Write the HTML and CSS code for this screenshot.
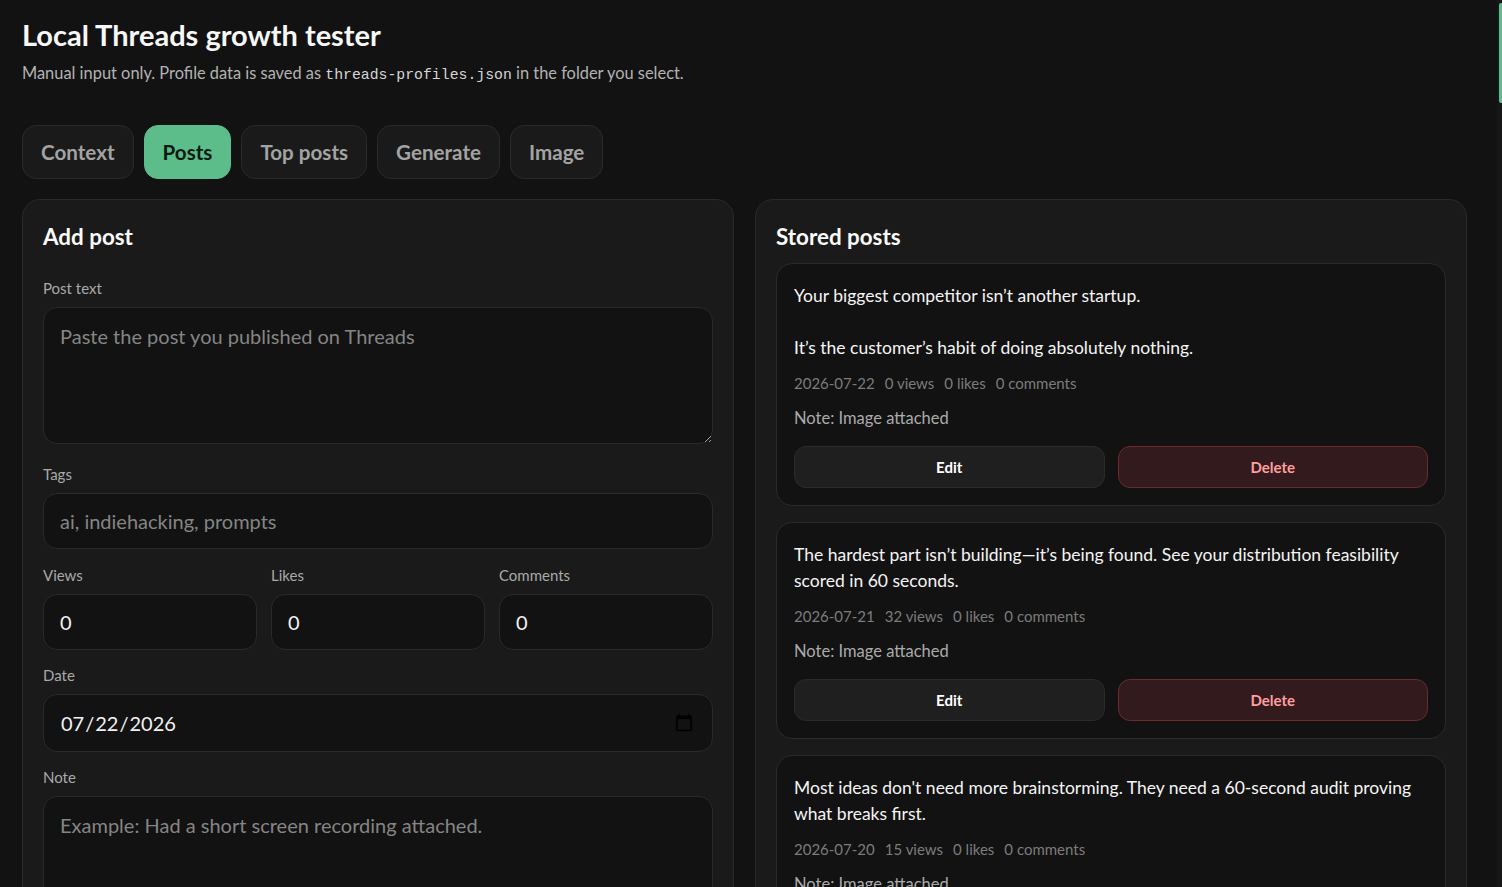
FILE: index.html
```html
<!DOCTYPE html>
<html lang="en">
<head>
<meta charset="utf-8">
<title>Local Threads growth tester</title>
<link rel="stylesheet" href="styles.css">
</head>
<body>
<div class="scrollbar" aria-hidden="true"><div class="scrollbar-thumb"></div></div>
<div class="app">
  <header class="header">
    <h1 class="title">Local Threads growth tester</h1>
    <p class="subtitle">Manual input only. Profile data is saved as <code class="mono">threads-profiles.json</code> in the folder you select.</p>
  </header>

  <nav class="tabs">
    <button class="tab">Context</button>
    <button class="tab active">Posts</button>
    <button class="tab">Top posts</button>
    <button class="tab">Generate</button>
    <button class="tab">Image</button>
  </nav>

  <main class="grid">
    <section class="panel">
      <h2 class="panel-title">Add post</h2>
      <div class="form">
        <label class="field">
          <span class="label">Post text</span>
          <textarea class="control area" placeholder="Paste the post you published on Threads"></textarea>
        </label>
        <label class="field">
          <span class="label">Tags</span>
          <input class="control" type="text" placeholder="ai, indiehacking, prompts">
        </label>
        <div class="row3">
          <label class="field">
            <span class="label">Views</span>
            <input class="control" type="number" value="0">
          </label>
          <label class="field">
            <span class="label">Likes</span>
            <input class="control" type="number" value="0">
          </label>
          <label class="field">
            <span class="label">Comments</span>
            <input class="control" type="number" value="0">
          </label>
        </div>
        <label class="field">
          <span class="label">Date</span>
          <input class="control date" type="date" value="2026-07-22">
        </label>
        <label class="field">
          <span class="label">Note</span>
          <textarea class="control area" placeholder="Example: Had a short screen recording attached."></textarea>
        </label>
        <button class="primary">Save post</button>
      </div>
    </section>

    <section class="panel">
      <h2 class="panel-title">Stored posts</h2>
      <div class="posts">
        <article class="post">
          <p class="post-text">Your biggest competitor isn’t another startup.

It’s the customer’s habit of doing absolutely nothing.</p>
          <p class="meta"><span>2026-07-22</span><span>0 views</span><span>0 likes</span><span>0 comments</span></p>
          <p class="note">Note: Image attached</p>
          <div class="actions"><button class="btn">Edit</button><button class="btn danger">Delete</button></div>
        </article>
        <article class="post">
          <p class="post-text">The hardest part isn’t building—it’s being found. See your distribution feasibility scored in 60 seconds.</p>
          <p class="meta"><span>2026-07-21</span><span>32 views</span><span>0 likes</span><span>0 comments</span></p>
          <p class="note">Note: Image attached</p>
          <div class="actions"><button class="btn">Edit</button><button class="btn danger">Delete</button></div>
        </article>
        <article class="post">
          <p class="post-text">Most ideas don't need more brainstorming. They need a 60-second audit proving what breaks first.</p>
          <p class="meta"><span>2026-07-20</span><span>15 views</span><span>0 likes</span><span>0 comments</span></p>
          <p class="note">Note: Image attached</p>
          <div class="actions"><button class="btn">Edit</button><button class="btn danger">Delete</button></div>
        </article>
        <article class="post">
          <p class="post-text">Shipping fast is easy. Shipping something people ask for twice is the real test.</p>
          <p class="meta"><span>2026-07-19</span><span>48 views</span><span>2 likes</span><span>0 comments</span></p>
          <p class="note">Note: Text only</p>
          <div class="actions"><button class="btn">Edit</button><button class="btn danger">Delete</button></div>
        </article>
        <article class="post">
          <p class="post-text">Your landing page isn’t confusing. It’s just answering questions nobody asked.</p>
          <p class="meta"><span>2026-07-18</span><span>21 views</span><span>1 likes</span><span>0 comments</span></p>
          <p class="note">Note: Image attached</p>
          <div class="actions"><button class="btn">Edit</button><button class="btn danger">Delete</button></div>
        </article>
        <article class="post">
          <p class="post-text">Validation isn’t a survey. It’s someone trying to pay before you’re ready.</p>
          <p class="meta"><span>2026-07-17</span><span>64 views</span><span>3 likes</span><span>1 comments</span></p>
          <p class="note">Note: Image attached</p>
          <div class="actions"><button class="btn">Edit</button><button class="btn danger">Delete</button></div>
        </article>
        <article class="post">
          <p class="post-text">Every feature you add is a promise you have to keep. Choose fewer promises.</p>
          <p class="meta"><span>2026-07-16</span><span>19 views</span><span>0 likes</span><span>0 comments</span></p>
          <p class="note">Note: Text only</p>
          <div class="actions"><button class="btn">Edit</button><button class="btn danger">Delete</button></div>
        </article>
        <article class="post">
          <p class="post-text">Distribution is a product decision, not a launch-day chore.</p>
          <p class="meta"><span>2026-07-15</span><span>27 views</span><span>1 likes</span><span>0 comments</span></p>
          <p class="note">Note: Image attached</p>
          <div class="actions"><button class="btn">Edit</button><button class="btn danger">Delete</button></div>
        </article>
        <article class="post">
          <p class="post-text">If you can’t explain who it’s for in one line, the market can’t either.</p>
          <p class="meta"><span>2026-07-14</span><span>33 views</span><span>0 likes</span><span>0 comments</span></p>
          <p class="note">Note: Image attached</p>
          <div class="actions"><button class="btn">Edit</button><button class="btn danger">Delete</button></div>
        </article>
        <article class="post">
          <p class="post-text">Prompts are cheap. Knowing which answer to throw away is the skill.</p>
          <p class="meta"><span>2026-07-13</span><span>41 views</span><span>2 likes</span><span>0 comments</span></p>
          <p class="note">Note: Text only</p>
          <div class="actions"><button class="btn">Edit</button><button class="btn danger">Delete</button></div>
        </article>
        <article class="post">
          <p class="post-text">Nobody churns from a tool they forgot they were paying for. Until they remember.</p>
          <p class="meta"><span>2026-07-12</span><span>12 views</span><span>0 likes</span><span>0 comments</span></p>
          <p class="note">Note: Image attached</p>
          <div class="actions"><button class="btn">Edit</button><button class="btn danger">Delete</button></div>
        </article>
        <article class="post">
          <p class="post-text">Build in public until it becomes a performance. Then just build.</p>
          <p class="meta"><span>2026-07-11</span><span>55 views</span><span>4 likes</span><span>1 comments</span></p>
          <p class="note">Note: Text only</p>
          <div class="actions"><button class="btn">Edit</button><button class="btn danger">Delete</button></div>
        </article>
      </div>
    </section>
  </main>
</div>
</body>
</html>
```

FILE: styles.css
```css
* { box-sizing: border-box; }

html { background: #121212; }

body {
  margin: 0;
  background: #121212;
  color: #f2f2f2;
  font-family: Lato, "Noto Sans", sans-serif;
}

/* browser scrollbar look-alike, pinned over the right edge */
.scrollbar {
  position: fixed;
  top: 0;
  right: 0;
  width: 5px;
  height: 100vh;
  background: #171717;
  z-index: 10;
}

.scrollbar-thumb {
  position: absolute;
  top: 3px;
  right: 0;
  width: 3px;
  height: 100px;
  background: #5cbd8b;
  border-radius: 2px 0 0 2px;
}

.app {
  width: 1490px;
  padding: 17px 22px 24px;
}

.title {
  margin: 0;
  font-size: 29px;
  line-height: 36px;
  font-weight: 700;
  color: #f7f7f7;
}

.subtitle {
  margin: 9px 0 0;
  font-size: 16.4px;
  line-height: 22px;
  color: #b3b3b3;
}

.mono {
  font-family: "Liberation Mono", "DejaVu Sans Mono", monospace;
  font-size: 14.8px;
  color: #d6d6d6;
}

.tabs {
  display: flex;
  gap: 10px;
  margin-top: 39px;
}

.tab {
  height: 54px;
  padding: 0 18px;
  border: 1px solid #2a2a2a;
  border-radius: 14px;
  background: #1a1a1a;
  color: #a3a3a3;
  font-family: inherit;
  font-size: 20.6px;
  font-weight: 700;
}

.tab.active {
  background: #5cbd8b;
  border-color: #5cbd8b;
  color: #0b1a12;
}

.grid {
  display: grid;
  grid-template-columns: 1fr 1fr;
  gap: 21px;
  margin-top: 20px;
  align-items: start;
  width: 1445px;
}

.panel {
  background: #1a1a1a;
  border: 1px solid #2a2a2a;
  border-radius: 18px;
  padding: 22px 20px 20px;
}

.panel-title {
  margin: 0 0 11px;
  font-size: 22.4px;
  line-height: 30px;
  font-weight: 700;
  color: #fafafa;
}

.form {
  display: flex;
  flex-direction: column;
  gap: 16px;
  margin-top: 27px;
}

.field {
  display: flex;
  flex-direction: column;
  gap: 9px;
  min-width: 0;
}

.label {
  font-size: 15px;
  line-height: 19px;
  color: #a9a9a9;
}

.control {
  width: 100%;
  height: 56px;
  padding: 0 16px;
  background: #121212;
  border: 1px solid #2a2a2a;
  border-radius: 14px;
  color: #f2f2f2;
  font-family: inherit;
  font-size: 20px;
  outline: none;
}

.control::placeholder { color: #858585; }

.area {
  height: 137px;
  padding: 14px 16px;
  line-height: 28px;
  resize: vertical;
  margin-bottom: 5px;
}

.row3 {
  display: grid;
  grid-template-columns: 1fr 1fr 1fr;
  gap: 14px;
  margin-top: 1px;
}

.date { height: 58px; }

.primary {
  height: 48px;
  border: none;
  border-radius: 14px;
  background: #5cbd8b;
  color: #0b1a12;
  font-family: inherit;
  font-size: 17px;
  font-weight: 700;
}

.posts {
  display: flex;
  flex-direction: column;
  gap: 16px;
}

.post {
  background: #121212;
  border: 1px solid #2a2a2a;
  border-radius: 16px;
  padding: 19px 17px 17px;
}

.post-text {
  margin: 0;
  font-size: 17.5px;
  line-height: 26px;
  color: #f5f5f5;
  white-space: pre-line;
}

.meta {
  display: flex;
  gap: 10px;
  margin: 11px 0 0;
  font-size: 15px;
  line-height: 22px;
  color: #7c7c7c;
}

.note {
  margin: 13px 0 0;
  font-size: 16.5px;
  line-height: 22px;
  color: #ababab;
}

.actions {
  display: grid;
  grid-template-columns: 1fr 1fr;
  gap: 13px;
  margin-top: 17px;
}

.btn {
  height: 42px;
  border: 1px solid #2b2b2b;
  border-radius: 12px;
  background: #1f1f1f;
  color: #ffffff;
  font-family: inherit;
  font-size: 15px;
  font-weight: 700;
}

.btn.danger {
  background: #331b1d;
  border-color: #6a2a2e;
  color: #ff9e9e;
}
```
